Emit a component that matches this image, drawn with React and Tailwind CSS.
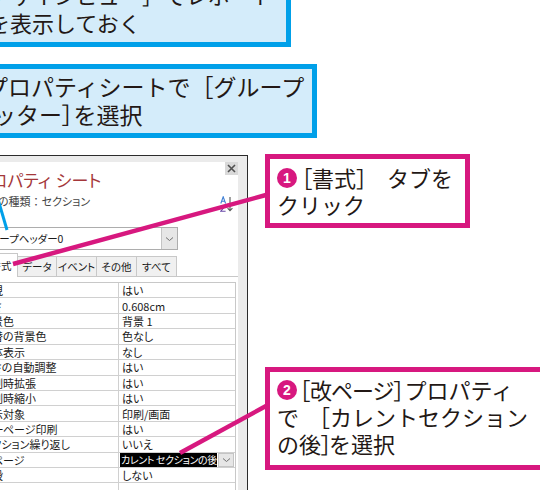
import React from "react";

const rows = [
  ["可視", "はい"],
  ["高さ", "0.608cm"],
  ["背景色", "背景 1"],
  ["代替の背景色", "色なし"],
  ["立体表示", "なし"],
  ["高さの自動調整", "はい"],
  ["印刷時拡張", "はい"],
  ["印刷時縮小", "はい"],
  ["表示対象", "印刷/画面"],
  ["同一ページ印刷", "はい"],
  ["セクション繰り返し", "いいえ"],
  ["改ページ", "カレント セクションの後", true],
  ["改段", "しない"],
  ["", ""],
];

function Chevron() {
  return (
    <svg width="9" height="6" viewBox="0 0 9 6">
      <path d="M1 1.5 L4.5 4.5 L8 1.5" fill="none" stroke="#707070" strokeWidth="1" />
    </svg>
  );
}

export default function App() {
  return (
    <div className="relative w-[540px] h-[490px] overflow-hidden bg-white font-['Noto_Sans_CJK_JP',sans-serif] text-[#231815]">
      {/* blue box 1 */}
      <div className="-ml-[50px] -mt-[28px] w-[341px] border-[5px] border-[#00a0e9] bg-[#d4ecfa] pt-[3px] pb-[6px] text-[22px] leading-[28px] whitespace-nowrap">
        <div className="pl-[11px]">［デザインビュー］でレポート</div>
        <div className="pl-[33px]">を表示しておく</div>
      </div>

      {/* blue box 2 */}
      <div className="-ml-[50px] mt-[17px] w-[367px] border-[5px] border-[#00a0e9] bg-[#d4ecfa] pt-[3px] pb-[5px] text-[23px] leading-[28px] whitespace-nowrap">
        <div className="pl-[30px]">プロパティシートで［グループ</div>
        <div className="pl-[15px] flex">
          <span>フッター</span>
          <span className="[font-feature-settings:'palt']">］</span>
          <span>を選択</span>
        </div>
      </div>

      <div className="mt-[16px] flex items-start">
        {/* property sheet */}
        <div className="-ml-[40px] mt-[1px] w-[288px] shrink-0 border-t border-r border-[#2b2b2b] bg-[#ebebeb] pt-[6px] pr-[9px] text-[#1a1a1a] [font-feature-settings:'palt']">
          <div className="bg-white pl-[20px] pb-[30px]">
            <div className="flex items-start justify-between">
              <div className="-ml-[5px] pt-[8px] text-[17px] leading-[20px] text-[#a4373a] whitespace-nowrap flex">
                <span>プロパティ</span>
                <span className="ml-[5px]">シート</span>
              </div>
              <div className="w-[13px] h-[13px] bg-[#d9d9d9] flex items-center justify-center">
                <svg width="9" height="9" viewBox="0 0 9 9">
                  <path d="M1 1 L8 8 M8 1 L1 8" stroke="#505050" strokeWidth="1.6" />
                </svg>
              </div>
            </div>

            <div className="flex items-start justify-between pr-[4px]">
              <div className="-ml-[4px] mt-[4px] text-[11px] leading-[14px] text-[#444] whitespace-nowrap flex">
                <span>選択の種類</span>
                <span className="[font-feature-settings:normal]">：</span>
                <span>セクション</span>
              </div>
              <svg className="mt-[6px]" width="14" height="16" viewBox="0 0 14 16">
                <path d="M0.8 7.5 L3.2 0.8 L5.6 7.5 M1.6 5.2 H4.8" stroke="#3f7fd4" fill="none" strokeWidth="1.1" />
                <path d="M0.8 9.6 H5.6 L0.8 15.2 H5.6" stroke="#6a4aa8" fill="none" strokeWidth="1.1" />
                <path d="M10 1 V14.6 M7.6 12.2 L10 14.8 L12.4 12.2" stroke="#555" fill="none" strokeWidth="1.1" />
              </svg>
            </div>

            <div className="mt-[15px] -ml-[4px] w-[202px] h-[23px] border border-[#adadad] flex items-center bg-white">
              <span className="pl-[3px] text-[10.5px] leading-[14px] whitespace-nowrap">グループヘッダー0</span>
              <div className="ml-auto h-full w-[16px] bg-[#e6e6e6] border-l border-[#c4c4c4] flex items-center justify-center">
                <Chevron />
              </div>
            </div>

            {/* tabs */}
            <div className="mt-[3px] flex items-end text-[10.5px] leading-[14px] whitespace-nowrap">
              <div className="relative -mb-px w-[38px] h-[24px] pl-[4px] bg-white border border-b-0 border-[#c8c8c8] flex items-center justify-center">
                書式
              </div>
              <div className="w-[39px] h-[20px] bg-[#f0f0f0] border-t border-r border-[#c8c8c8] flex items-center justify-center">
                データ
              </div>
              <div className="w-[40px] h-[20px] bg-[#f0f0f0] border-t border-r border-[#c8c8c8] flex items-center justify-center">
                イベント
              </div>
              <div className="w-[40px] h-[20px] bg-[#f0f0f0] border-t border-r border-[#c8c8c8] flex items-center justify-center">
                その他
              </div>
              <div className="w-[40px] h-[20px] bg-[#f0f0f0] border-t border-r border-[#c8c8c8] flex items-center justify-center">
                すべて
              </div>
            </div>

            <div className="border-t border-[#c8c8c8] pt-[5px] pr-[2px]">
              <div className="border-t border-l border-r border-[#c8c8c8] text-[11px] leading-[14px]">
                {rows.map(([label, value, selected], i) => (
                  <div key={i} className="flex h-[15.43px] border-b border-[#d0d0d0]">
                    <div className="w-[137px] shrink-0 flex items-center whitespace-nowrap overflow-hidden">
                      <span>{label}</span>
                    </div>
                    {selected ? (
                      <div className="flex-1 border-l border-[#d0d0d0] pl-[1px] flex items-stretch">
                        <div className="w-[97px] bg-black text-white pl-[1px] text-[10px] tracking-[-0.4px] flex items-center whitespace-nowrap overflow-hidden">
                          {value}
                        </div>
                        <div className="ml-[1px] w-[16px] bg-[#e6e6e6] border border-[#c4c4c4] flex items-center justify-center">
                          <Chevron />
                        </div>
                      </div>
                    ) : (
                      <div className="flex-1 border-l border-[#d0d0d0] pl-[3px] flex items-center whitespace-nowrap">
                        {value}
                      </div>
                    )}
                  </div>
                ))}
              </div>
            </div>
          </div>
        </div>

        {/* callouts */}
        <div className="ml-[17px] flex flex-col shrink-0">
          <div className="w-[205px] border-[5px] border-[#d7187f] bg-white pt-[5px] pb-[5px] pl-[7px] text-[22px] leading-[27px] whitespace-nowrap">
            <div className="flex items-center">
              <span className="mr-[4px] w-[20px] h-[20px] rounded-full bg-[#d7187f] text-white text-[14px] font-bold leading-none flex items-center justify-center font-['Liberation_Sans',sans-serif]">
                1
              </span>
              <span className="[font-feature-settings:'palt']">［</span>
              <span>書式］</span>
              <span className="ml-[9px]">タブを</span>
            </div>
            <div>クリック</div>
          </div>

          <div className="mt-[139px] w-[300px] border-[5px] border-[#d7187f] bg-white pt-[4px] pb-[8px] pl-[7px] text-[22px] leading-[27px] whitespace-nowrap">
            <div className="flex items-center">
              <span className="mr-[2px] w-[20px] h-[20px] rounded-full bg-[#d7187f] text-white text-[14px] font-bold leading-none flex items-center justify-center font-['Liberation_Sans',sans-serif]">
                2
              </span>
              <span className="[font-feature-settings:'palt']">［</span>
              <span className="tracking-[-1px]">改ページ</span>
              <span className="[font-feature-settings:'palt']">］</span>
              <span>プロパティ</span>
            </div>
            <div className="flex">
              <span>で</span>
              <span className="ml-[9px]">［カレントセクション</span>
            </div>
            <div className="flex">
              <span>の後</span>
              <span className="[font-feature-settings:'palt']">］</span>
              <span className="-ml-[3px]">を選択</span>
            </div>
          </div>
        </div>
      </div>

      {/* connector lines */}
      <svg className="absolute left-0 top-0 pointer-events-none" width="540" height="490" viewBox="0 0 540 490">
        <line x1="266" y1="195" x2="13" y2="264" stroke="#d7187f" strokeWidth="4.5" />
        <line x1="266" y1="406" x2="180" y2="453" stroke="#d7187f" strokeWidth="4.5" />
        <line x1="-20" y1="138" x2="7" y2="230" stroke="#00a0e9" strokeWidth="3" />
      </svg>
    </div>
  );
}
